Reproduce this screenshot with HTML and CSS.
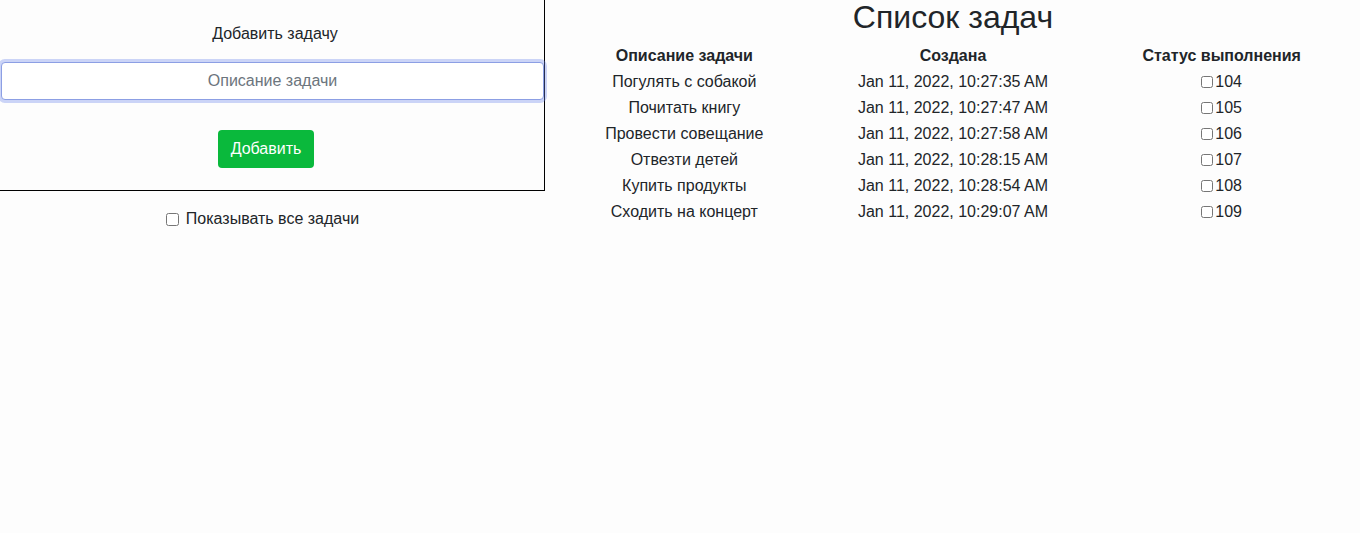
FILE: index.html
```html
<!DOCTYPE html>
<html lang="ru">
<head>
<meta charset="utf-8">
<title>Список задач</title>
<link rel="stylesheet" href="styles.css">
</head>
<body>
<div class="page">
  <div class="left">
    <div class="add-box">
      <div class="add-title">Добавить задачу</div>
      <input class="task-input" type="text" placeholder="Описание задачи">
      <button class="add-btn" type="button">Добавить</button>
    </div>
    <label class="show-all"><input type="checkbox" class="cb"> Показывать все задачи</label>
  </div>
  <div class="right">
    <h1 class="title">Список задач</h1>
    <table class="tasks">
      <thead>
        <tr><th>Описание задачи</th><th>Создана</th><th>Статус выполнения</th></tr>
      </thead>
      <tbody>
        <tr><td>Погулять с собакой</td><td>Jan 11, 2022, 10:27:35 AM</td><td><input type="checkbox" class="cb-small">104</td></tr>
        <tr><td>Почитать книгу</td><td>Jan 11, 2022, 10:27:47 AM</td><td><input type="checkbox" class="cb-small">105</td></tr>
        <tr><td>Провести совещание</td><td>Jan 11, 2022, 10:27:58 AM</td><td><input type="checkbox" class="cb-small">106</td></tr>
        <tr><td>Отвезти детей</td><td>Jan 11, 2022, 10:28:15 AM</td><td><input type="checkbox" class="cb-small">107</td></tr>
        <tr><td>Купить продукты</td><td>Jan 11, 2022, 10:28:54 AM</td><td><input type="checkbox" class="cb-small">108</td></tr>
        <tr><td>Сходить на концерт</td><td>Jan 11, 2022, 10:29:07 AM</td><td><input type="checkbox" class="cb-small">109</td></tr>
      </tbody>
    </table>
  </div>
</div>
</body>
</html>
```
FILE: styles.css
```css
html, body {
  margin: 0;
  padding: 0;
  background: #fdfdfd;
}
body {
  font-family: "Liberation Sans", Arial, sans-serif;
  font-size: 16px;
  line-height: 24px;
  color: #212529;
}
.page {
  display: flex;
  align-items: flex-start;
}
.left {
  width: 545px;
  flex: none;
  display: flex;
  flex-direction: column;
  align-items: center;
}
.add-box {
  box-sizing: border-box;
  width: 545px;
  border-right: 1px solid #000;
  border-bottom: 1px solid #000;
  padding: 22px 0 22px;
  display: flex;
  flex-direction: column;
  align-items: center;
}
.add-title {
  text-align: center;
  margin-left: 6px;
}
.task-input {
  box-sizing: border-box;
  align-self: stretch;
  margin: 16px 0 0 1px;
  height: 38px;
  border: 1px solid #8c9fe4;
  border-radius: 4px;
  box-shadow: 0 0 0 3px rgba(110, 135, 235, 0.35);
  background: #fff;
  font-family: inherit;
  font-size: 16px;
  text-align: center;
  padding: 6px 12px;
  outline: none;
  color: #212529;
}
.task-input::placeholder {
  color: #6c757d;
}
.add-btn {
  margin-top: 30px;
  margin-right: 12px;
  height: 38px;
  padding: 6px 13px;
  border: none;
  border-radius: 4px;
  background: #0ab93c;
  color: #fff;
  font-family: inherit;
  font-size: 16px;
  line-height: 24px;
}
.show-all {
  margin-top: 16px;
  margin-right: 20px;
  display: flex;
  align-items: center;
  gap: 4px;
}
.cb {
  width: 13px;
  height: 13px;
  margin: 0 3px 0 0;
}
.right {
  flex: 1;
  display: flex;
  flex-direction: column;
  align-items: center;
  padding: 0 4px 0 5px;
}
.title {
  margin: 0;
  font-size: 32px;
  font-weight: 400;
  line-height: 34px;
  text-align: center;
}
.tasks {
  width: 100%;
  border-collapse: collapse;
  margin-top: 9px;
  table-layout: fixed;
}
.tasks th, .tasks td {
  text-align: center;
  padding: 0;
  height: 26px;
  font-size: 16px;
}
.tasks th {
  font-weight: 700;
}
.cb-small {
  width: 12px;
  height: 12px;
  margin: 0 2px 0 0;
  vertical-align: -1px;
}
```
